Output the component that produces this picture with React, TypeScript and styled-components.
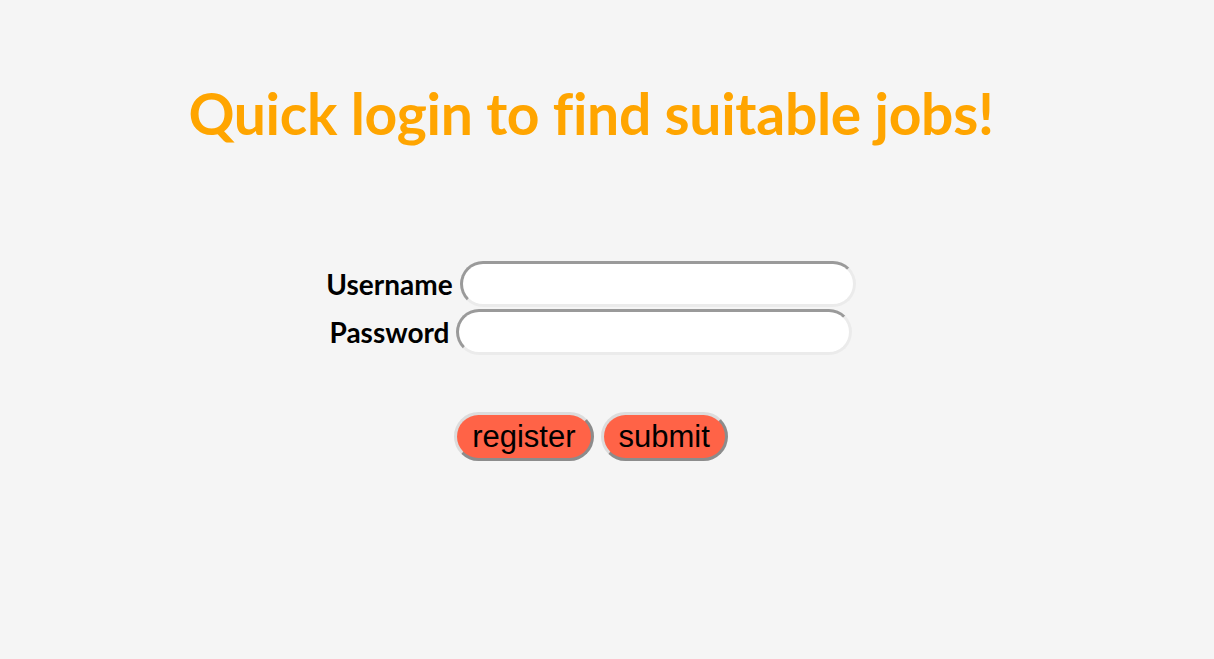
import React from "react";
import styled, { createGlobalStyle } from "styled-components";

const Global = createGlobalStyle`
  html, body { margin: 0; padding: 0; background: #f5f5f5; }
  body { font-family: "Liberation Sans", Arial, sans-serif; }
`;

const Page = styled.main`
  min-height: 659px;
  display: flex;
  flex-direction: column;
  align-items: center;
  padding: 74px 32px 0 0;
  box-sizing: border-box;
`;

const Title = styled.h1`
  margin: 0;
  font-family: Lato, "Open Sans", sans-serif;
  font-weight: 700;
  font-size: 57px;
  line-height: 78px;
  color: #ffa500;
  letter-spacing: -0.3px;
`;

const Form = styled.form`
  margin-top: 109px;
  display: flex;
  flex-direction: column;
  align-items: center;
  gap: 2px;
`;

const Row = styled.div`
  display: flex;
  align-items: center;
  gap: 7px;
`;

const Label = styled.label`
  font-family: Lato, "Open Sans", sans-serif;
  font-weight: 700;
  font-size: 28px;
  color: #000;
`;

const Input = styled.input`
  width: 396px;
  height: 46px;
  box-sizing: border-box;
  border: 3px solid;
  border-color: #9a9a9a #ebebeb #ebebeb #9a9a9a;
  border-radius: 23px;
  background: #fff;
  outline: none;
  padding: 0 16px;
  font-size: 20px;
`;

const Actions = styled.div`
  margin-top: 55px;
  display: flex;
  gap: 7px;
`;

const Button = styled.button`
  height: 49px;
  box-sizing: border-box;
  border: 3px solid;
  border-color: #dcdcdc #8c8c8c #8c8c8c #dcdcdc;
  border-radius: 25px;
  background: #ff6347;
  color: #000;
  font-family: "Liberation Sans", Arial, sans-serif;
  font-size: 31px;
  line-height: 1;
  padding: 0 15px;
  cursor: pointer;
`;

export default function App() {
  return (
    <>
      <Global />
      <Page>
        <Title>Quick login to find suitable jobs!</Title>
        <Form onSubmit={(e) => e.preventDefault()}>
          <Row>
            <Label htmlFor="u">Username</Label>
            <Input id="u" type="text" />
          </Row>
          <Row>
            <Label htmlFor="p">Password</Label>
            <Input id="p" type="password" />
          </Row>
          <Actions>
            <Button type="button">register</Button>
            <Button type="submit">submit</Button>
          </Actions>
        </Form>
      </Page>
    </>
  );
}
